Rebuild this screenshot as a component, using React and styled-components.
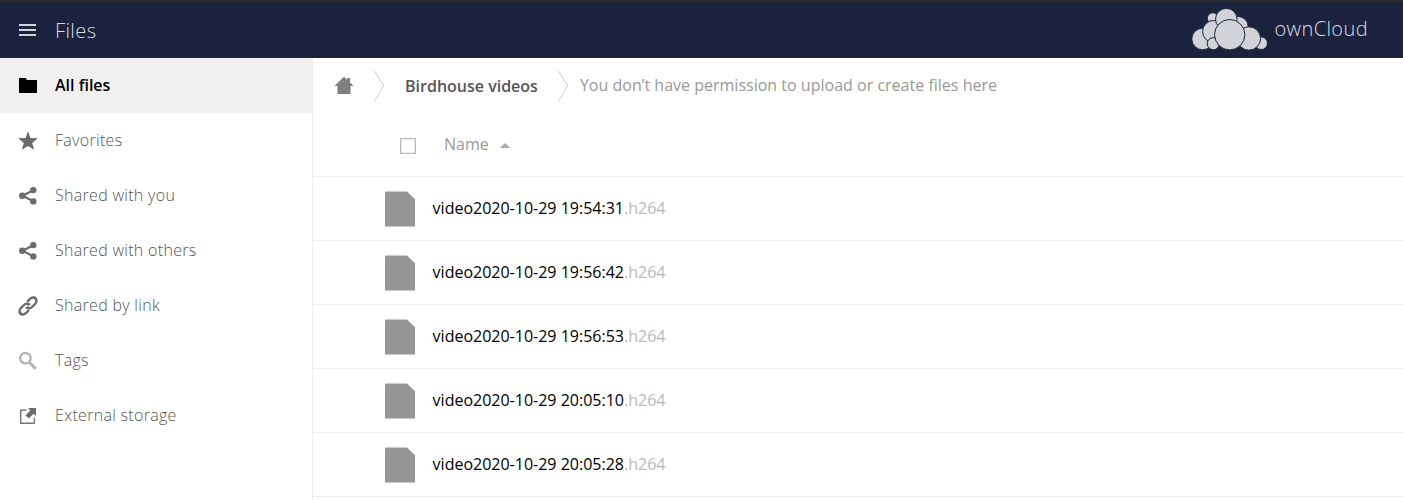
import React from "react";
import styled, { createGlobalStyle } from "styled-components";

const Global = createGlobalStyle`
  * { box-sizing: border-box; }
  body {
    margin: 0;
    background: #fff;
    font-family: "Open Sans", "Noto Sans", sans-serif;
    font-size: 16px;
    overflow: hidden;
  }
`;

const Page = styled.div`
  height: 500px;
  display: flex;
  flex-direction: column;
  overflow: hidden;
`;

const Header = styled.header`
  flex: none;
  height: 58px;
  padding: 0 35px 0 19px;
  border-top: 2px solid #2b2b2b;
  background: #1b223d;
  display: flex;
  justify-content: space-between;
  color: #dcdde2;
  font-weight: 300;
  letter-spacing: 0.4px;
`;

const AppMenu = styled.div`
  display: flex;
  align-items: center;
  gap: 19px;
  font-size: 20px;
  line-height: 28px;
`;

const AppName = styled.span`
  padding-top: 2px;
`;

const Bars = styled.div`
  width: 17px;
  height: 12px;
  border: solid #d2d3d9;
  border-width: 2px 0;
  display: flex;
  align-items: center;
  &::before {
    content: "";
    width: 100%;
    height: 2px;
    background: #d2d3d9;
  }
`;

const Brand = styled.div`
  display: flex;
  align-items: center;
  gap: 7px;
  padding-bottom: 2px;
  font-size: 20px;
  line-height: 28px;
  svg { display: block; margin-bottom: 1px; }
`;

const Body = styled.div`
  flex: 1;
  min-height: 0;
  display: flex;
`;

const Sidebar = styled.nav`
  width: 313px;
  border-right: 1px solid #eee;
`;

const NavItem = styled.div`
  height: 55px;
  padding: 0 0 1px 18px;
  display: flex;
  align-items: center;
  gap: 17px;
  background: ${(p) => (p.$active ? "#f0f0f0" : "transparent")};
  color: ${(p) => (p.$active ? "#000" : "#555")};
  font-weight: ${(p) => (p.$active ? 600 : 300)};
  letter-spacing: ${(p) => (p.$active ? "0" : "0.3px")};
  svg { display: block; margin-top: 1px; }
`;

const Main = styled.main`
  flex: 1;
  min-width: 0;
`;

const Crumbs = styled.div`
  height: 55px;
  padding-left: 21px;
  display: flex;
  align-items: center;
  svg { display: block; }
`;

const Crumb = styled.span`
  margin: 1px 20px 0 20px;
  font-weight: 600;
  color: #555;
`;

const Notice = styled.span`
  margin: 0 0 1px 11px;
  color: #999;
  letter-spacing: 0.01px;
`;

const ListHead = styled.div`
  height: 64px;
  padding: 0 0 1px 87px;
  border-bottom: 1px solid #eee;
  display: flex;
  align-items: center;
  color: #999;
`;

const Checkbox = styled.span`
  width: 16px;
  height: 16px;
  margin: 3px 28px 0 0;
  border: 1px solid #b4b4b4;
  box-shadow: inset 0 0 0 1px #ececec;
`;

const SortArrow = styled.span`
  margin: 2px 0 0 11px;
  border: solid transparent;
  border-width: 0 5px 5px;
  border-bottom-color: #aaa;
`;

const FileRow = styled.div`
  height: 64px;
  padding-left: 72px;
  border-bottom: 1px solid #eee;
  display: flex;
  align-items: center;
  gap: 17.6px;
  color: #000;
  svg { display: block; margin-top: 1px; }
`;

const FileName = styled.span`
  padding-bottom: 1px;
`;

const Extension = styled.span`
  color: #b8b8b8;
`;

const Cloud = () => (
  <svg width="76" height="42" viewBox="1191 8 76 42" fill="#d2d3d9" stroke="#1b223d" strokeWidth="1">
    <circle cx="1212.8" cy="18.2" r="5.5" />
    <circle cx="1238.2" cy="26.5" r="10" />
    <circle cx="1202.6" cy="39" r="10.8" />
    <circle cx="1213.6" cy="31.5" r="11" />
    <circle cx="1226.3" cy="19.2" r="10.8" />
    <circle cx="1213.3" cy="43.7" r="6.1" />
    <circle cx="1261.2" cy="43.2" r="6.3" />
    <circle cx="1248.9" cy="38.5" r="11.7" />
    <circle cx="1229.7" cy="34.7" r="15.2" />
  </svg>
);

const icons = {
  folder: (
    <path fill="#000" d="M1 2.6Q1 2 1.7 2H7.5L9 4H18.3Q19 4 19 4.7V16.4Q19 17 18.3 17H1.7Q1 17 1 16.4Z" />
  ),
  star: (
    <path fill="#6b6b6b" d="M10 .3 12.5 7 19.8 7.3 14.2 12 16.2 18.7 10 15 3.8 18.7 5.8 12 .2 7.3 7.5 7Z" />
  ),
  share: (
    <g fill="#6b6b6b">
      <path d="M15.3 4.2 4.5 9.7 15.3 15.2" fill="none" stroke="#6b6b6b" strokeWidth="2.2" />
      <circle cx="15.3" cy="4.1" r="3.2" />
      <circle cx="4.3" cy="9.7" r="3.3" />
      <circle cx="15.3" cy="15.4" r="3.2" />
    </g>
  ),
  link: (
    <g
      fill="none"
      stroke="#6b6b6b"
      strokeWidth="3.2"
      transform="translate(10 10) rotate(-45) scale(.88 .72) rotate(45) translate(-12 -12)"
    >
      <path d="M10 13a5 5 0 0 0 7.54.54l3-3a5 5 0 0 0-7.07-7.07l-3.2 3.2" />
      <path d="M14 11a5 5 0 0 0-7.54-.54l-3 3a5 5 0 0 0 7.07 7.07l3.2-3.2" />
    </g>
  ),
  search: (
    <g fill="none" stroke="#b3b3b3">
      <circle cx="7.4" cy="7.2" r="5.2" strokeWidth="2.4" />
      <path d="M11 11 17.7 17.7" strokeWidth="3" />
    </g>
  ),
  external: (
    <g>
      <path d="M8.5 4.2H2.7V17.3H16.4V11.5" fill="none" stroke="#777" strokeWidth="1.4" />
      <path d="M10 2H18V10L15.6 7.7 10.7 12.6 9.5 10.9 7.4 9.5 12.3 4.4Z" fill="#6b6b6b" />
    </g>
  ),
};

const Icon = ({ name }) => (
  <svg width="20" height="20" viewBox="0 0 20 20">{icons[name]}</svg>
);

const Home = () => (
  <svg width="20" height="20" viewBox="0 0 20 20">
    <path fill="#808080" d="M10 .8 13.2 3.8V2H16V6.5L19.6 10H16.5V18H3.5V10H.4Z" />
  </svg>
);

const Chevron = ({ className }) => (
  <svg className={className} width="11" height="32" viewBox="0 0 11 32">
    <path d="M.6 1 9.8 16 .6 31" fill="none" stroke="#d0d0d0" strokeWidth="1" />
  </svg>
);

const Separator = styled(Chevron)`
  margin-left: ${(p) => p.$space || 0}px;
`;

const nav = [
  ["folder", "All files"],
  ["star", "Favorites"],
  ["share", "Shared with you"],
  ["share", "Shared with others"],
  ["link", "Shared by link"],
  ["search", "Tags"],
  ["external", "External storage"],
];

const files = [
  "video2020-10-29 19:54:31",
  "video2020-10-29 19:56:42",
  "video2020-10-29 19:56:53",
  "video2020-10-29 20:05:10",
  "video2020-10-29 20:05:28",
];

export default function App() {
  return (
    <Page>
      <Global />
      <Header>
        <AppMenu><Bars /><AppName>Files</AppName></AppMenu>
        <Brand><Cloud />ownCloud</Brand>
      </Header>
      <Body>
        <Sidebar>
          {nav.map(([icon, label], i) => (
            <NavItem key={label} $active={i === 0}>
              <Icon name={icon} />
              {label}
            </NavItem>
          ))}
        </Sidebar>
        <Main>
          <Crumbs>
            <Home />
            <Separator $space={20} />
            <Crumb>Birdhouse videos</Crumb>
            <Separator />
            <Notice>You don’t have permission to upload or create files here</Notice>
          </Crumbs>
          <ListHead>
            <Checkbox />
            Name
            <SortArrow />
          </ListHead>
          {files.map((file) => (
            <FileRow key={file}>
              <svg width="30" height="36" viewBox="0 0 30 36">
                <path fill="#969696" d="M1 .4H22L30 8.3V34.8Q30 35.6 29 35.6H1Q0 35.6 0 34.8V1.2Q0 .4 1 .4Z" />
              </svg>
              <FileName>{file}<Extension>.h264</Extension></FileName>
            </FileRow>
          ))}
        </Main>
      </Body>
    </Page>
  );
}
